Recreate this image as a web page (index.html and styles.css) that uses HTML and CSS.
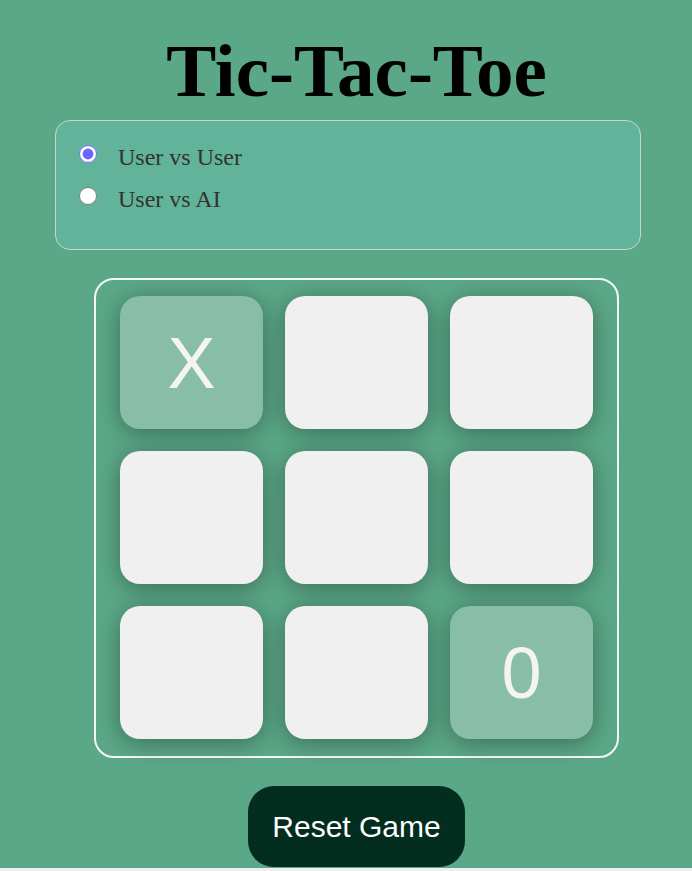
FILE: index.html
```html
<!DOCTYPE html>
<html>
<head>
<meta charset="utf-8">
<link rel="stylesheet" href="styles.css">
</head>
<body>
<div class="page">
  <h1 class="title">Tic-Tac-Toe</h1>
  <div class="mode-box">
    <label class="mode"><input type="radio" name="mode" checked><span>User vs User</span></label>
    <label class="mode"><input type="radio" name="mode"><span>User vs AI</span></label>
  </div>
  <div class="board">
    <div class="cell filled">X</div>
    <div class="cell"></div>
    <div class="cell"></div>
    <div class="cell"></div>
    <div class="cell"></div>
    <div class="cell"></div>
    <div class="cell"></div>
    <div class="cell"></div>
    <div class="cell filled">0</div>
  </div>
  <button class="reset">Reset Game</button>
</div>
</body>
</html>
```
FILE: styles.css
```css
html, body {
  margin: 0;
  padding: 0;
  background: #efefef;
}
.page {
  height: 868px;
  box-sizing: border-box;
  background: #5ba888;
  padding: 28px 0 0 21px;
  display: flex;
  flex-direction: column;
  align-items: center;
}
.title {
  margin: 0;
  font-family: "Liberation Serif", "Times New Roman", serif;
  font-weight: bold;
  font-size: 75px;
  line-height: normal;
  color: #000;
}
.mode-box {
  align-self: flex-start;
  margin: 6px 0 0 34px;
  width: 586px;
  height: 130px;
  box-sizing: border-box;
  border: 1px solid #c9d6cf;
  border-radius: 15px;
  background: #61b399;
  padding: 22px 0 0 23px;
  display: flex;
  flex-direction: column;
  gap: 14px;
}
.mode {
  display: flex;
  align-items: center;
  font-family: "Liberation Serif", "Times New Roman", serif;
  font-size: 24px;
  color: #333;
  height: 28px;
}
.mode input {
  margin: 0 21px 0 0;
  width: 18px;
  height: 18px;
  accent-color: #6b66ff;
  position: relative;
  top: -3px;
}
.board {
  margin-top: 28px;
  width: 525px;
  height: 480px;
  box-sizing: border-box;
  border: 2px solid #f6f6f6;
  border-radius: 20px;
  padding: 16px 24px 15px;
  display: grid;
  grid-template-columns: repeat(3, 143px);
  grid-template-rows: repeat(3, 133px);
  gap: 22px;
}
.cell {
  background: #f0f0f0;
  border-radius: 20px;
  box-shadow: 0 4px 24px rgba(0, 0, 0, 0.35);
  display: flex;
  align-items: center;
  justify-content: center;
  font-family: "Liberation Sans", Arial, sans-serif;
  font-size: 72px;
  color: #f4f4f4;
}
.cell.filled {
  background: #88bea7;
}
.reset {
  margin-top: 28px;
  width: 217px;
  height: 81px;
  border: none;
  border-radius: 26px;
  background: #022d1f;
  color: #fff;
  font-family: "Liberation Sans", Arial, sans-serif;
  font-size: 30px;
  padding: 0;
}
```
